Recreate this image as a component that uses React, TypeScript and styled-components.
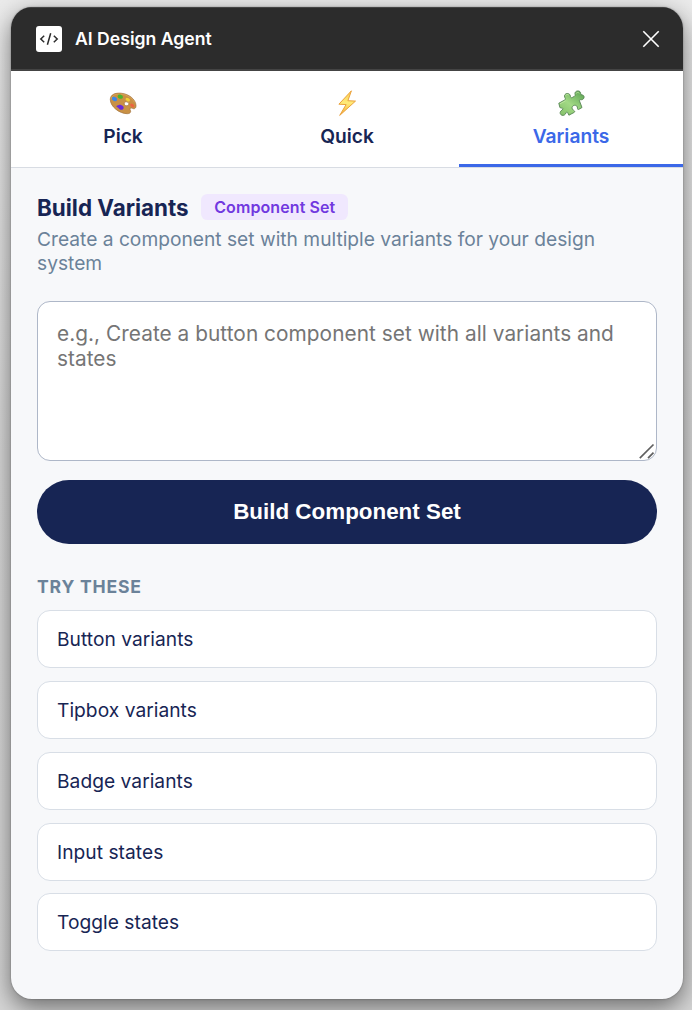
import React, { useState } from "react";
import styled, { createGlobalStyle } from "styled-components";

const GlobalStyle = createGlobalStyle`
  * { box-sizing: border-box; }
  body {
    margin: 0;
    background: #e6e6e6;
    font-family: Inter, "Liberation Sans", sans-serif;
  }
`;

const Stage = styled.div`
  height: 1010px;
  padding: 7px 9px 11px 11px;
  overflow: hidden;
  background: linear-gradient(#ebebeb, #d9d9d9 45%, #d6d6d6);
`;

const Panel = styled.main`
  display: flex;
  flex-direction: column;
  height: 992px;
  border-radius: 21px;
  background: #f7f8fa;
  box-shadow: 0 0 2px rgba(0, 0, 0, 0.35), 0 8px 24px rgba(0, 0, 0, 0.5);
  overflow: hidden;
`;

const Header = styled.header`
  display: flex;
  align-items: center;
  height: 64px;
  padding: 0 20px 0 25px;
  background: #2c2c2c;
  border-bottom: 2px solid #444;
  border-top: 1px solid #444;
`;

const HeaderTitle = styled.h1`
  flex: 1;
  margin: 0 0 0 13px;
  color: #fff;
  font-size: 17.6px;
  line-height: 24px;
  font-weight: 600;
`;

const CloseButton = styled.button`
  display: flex;
  padding: 3px;
  border: 0;
  background: none;
`;

const Tabs = styled.nav`
  display: grid;
  grid-template-columns: repeat(3, 1fr);
  height: 97px;
  background: #fff;
  border-bottom: 1px solid #d8dce3;
`;

const Tab = styled.button<{ $active: boolean }>`
  display: flex;
  flex-direction: column;
  align-items: center;
  gap: 5px;
  padding: 18px 0 0;
  border: 0;
  border-bottom: 3px solid ${(p) => (p.$active ? "#3b68e8" : "transparent")};
  background: none;
  color: ${(p) => (p.$active ? "#3b68e8" : "#172554")};
  font-family: inherit;
  font-size: 19.2px;
  line-height: 24px;
  font-weight: 600;
`;

const Content = styled.section`
  display: flex;
  flex-direction: column;
  padding: 26px 26px 0;
`;

const TitleRow = styled.div`
  display: flex;
  align-items: flex-start;
  gap: 12.6px;
  height: 27px;
`;

const Title = styled.h2`
  margin: 0;
  color: #172554;
  font-size: 22.4px;
  line-height: 27px;
  font-weight: 700;
`;

const Badge = styled.span`
  height: 26px;
  padding: 0 13px;
  border-radius: 6.4px;
  background: #f0e8fe;
  color: #7138e0;
  font-size: 16px;
  line-height: 26px;
  font-weight: 600;
  letter-spacing: 0.1px;
`;

const Description = styled.p`
  margin: 6px 0 0;
  color: #6b8299;
  font-size: 19.2px;
  line-height: 24px;
`;

const PromptField = styled.div`
  position: relative;
  height: 160px;
  margin-top: 26px;
`;

const PromptInput = styled.textarea`
  display: block;
  width: 100%;
  height: 100%;
  padding: 19px 19px;
  border: 1px solid #aeb7c8;
  border-radius: 13px;
  background: #fff;
  color: #172554;
  font-family: inherit;
  font-size: 20.8px;
  line-height: 25px;
  letter-spacing: 0.05px;
  resize: none;
  outline: none;
  &::placeholder { color: #757575; opacity: 1; }
`;

const Grip = styled.svg`
  position: absolute;
  right: 2px;
  bottom: 2px;
`;

const BuildButton = styled.button`
  height: 64px;
  margin-top: 19px;
  padding: 0;
  border: 0;
  border-radius: 32px;
  background: #172554;
  color: #fff;
  font-family: "Liberation Sans", Arial, sans-serif;
  font-size: 22.4px;
  font-weight: 700;
`;

const ExamplesLabel = styled.h3`
  margin: 31px 0 11px;
  color: #6b8299;
  font-size: 17.6px;
  line-height: 24px;
  font-weight: 700;
  letter-spacing: 0.8px;
`;

const ExampleList = styled.div`
  display: flex;
  flex-direction: column;
  gap: 12.85px;
`;

const Example = styled.button`
  height: 58px;
  padding: 0 19px;
  border: 1px solid #d8dee6;
  border-radius: 13px;
  background: #fff;
  color: #172554;
  font-family: inherit;
  font-size: 19.2px;
  letter-spacing: 0.03px;
  text-align: left;
`;

const CodeLogo = () => (
  <svg width="26" height="26" viewBox="0 0 26 26" fill="none">
    <rect width="26" height="26" rx="3" fill="#fff" />
    <path d="M8.2 9.8 4.8 13l3.4 3.2M17.8 9.8l3.4 3.2-3.4 3.2M14.7 7.2 11.4 18.8" stroke="#2c2c2c" strokeWidth="1.5" />
  </svg>
);

const CloseIcon = () => (
  <svg width="18" height="18" viewBox="0 0 18 18">
    <path d="M1.3 1.3 16.7 16.7M16.7 1.3 1.3 16.7" stroke="#fff" strokeWidth="1.6" />
  </svg>
);

const PaletteIcon = () => (
  <svg width="30" height="30" viewBox="0 0 30 30">
    <path d="M2.3 10.2C2.5 5.6 7.2 3.7 13 4.2c7.8.6 14.8 6.2 15 12.3.1 3-1.7 3.8-3.7 2.8-1.6-.8-3 .2-2.1 1.7 1.2 2-.1 3.7-2.9 3.7C11.8 24.8 2 17.7 2.3 10.2Zm14.2 3.5c-.9 1.5.2 3 1.9 3 1.9 0 3-1.2 2.3-2.5-.8-1.5-3.3-1.9-4.2-.5Z" fill="#c99145" fillRule="evenodd" stroke="#a0703a" strokeWidth=".7" />
    <path d="M3.1 9.7C4 6.2 8 4.6 13 5.1c6 .5 11.5 4 13.5 8.4" fill="none" stroke="#dca65a" strokeWidth=".8" />
    <ellipse cx="6.5" cy="10" rx="2.7" ry="2" fill="#3e86e4" transform="rotate(20 6.5 10)" />
    <ellipse cx="12.3" cy="7.7" rx="2.7" ry="2" fill="#48b52d" transform="rotate(15 12.3 7.7)" />
    <ellipse cx="19.8" cy="10.6" rx="2.4" ry="1.6" fill="#f1cf32" transform="rotate(30 19.8 10.6)" />
    <ellipse cx="24.2" cy="16.4" rx="2.3" ry="1.5" fill="#ed6441" transform="rotate(40 24.2 16.4)" />
    <path d="M9.4 16.5c1.5-.1 2.3-1.3 3.6-.5 1.7.4 3 1.7 2.6 3.2-.5 1.7-2.5 1.9-4 1-1.2-.6-1.2-1.7-2.6-2.1-.9-.3-.7-1.3.4-1.6Z" fill="#6a2bd9" />
  </svg>
);

const BoltIcon = () => (
  <svg width="30" height="30" viewBox="0 0 30 30">
    <defs>
      <linearGradient id="bolt" x2="0" y2="1">
        <stop stopColor="#f9cf54" />
        <stop offset=".5" stopColor="#ffeb78" />
        <stop offset="1" stopColor="#f4aa35" />
      </linearGradient>
    </defs>
    <path d="M19.4 1.8 6.9 15.2l7.2.4L7.7 26.4 23.5 12.1l-7.6-.4L19.4 1.8Z" fill="url(#bolt)" stroke="#eba23d" strokeWidth="1" strokeLinejoin="round" />
  </svg>
);

const PuzzleIcon = () => (
  <svg width="30" height="30" viewBox="0 0 30 30">
    <defs>
      <linearGradient id="puzzle" x1="0" y1="1" x2=".8" y2="0">
        <stop stopColor="#83bf68" />
        <stop offset=".5" stopColor="#a2d985" />
        <stop offset="1" stopColor="#63a958" />
      </linearGradient>
    </defs>
    <path
      d="M2.8 14.2 8.9 10.9C9.8 10.2 9.3 9.3 8.7 8.2 7.9 6.4 9.2 4.6 11.2 4.5c2-.1 3.2 1.3 3.3 3 .1 1.2.8 1.5 1.7 1l2.4-1.3c.8-.5.6-1.3.4-2.1-.4-1.7 1-3.2 2.9-3.2 1.7 0 2.9 1.1 2.8 2.7 0 .9.4 1.2 1.3 1.3 1.7.1 2.5 1.6 1.9 3.1-.5 1.4-1.8 1.9-3.3 1.7-1-.1-1.4.5-1.1 1.3l2.5 6.5-3.3 1.9c-.9.3-1.3-.3-1.2-1.2.1-1.9-1.3-3.2-3.1-2.9-1.9.3-2.9 2.1-2.1 3.7.5 1.1 1.7 1.3 2.2 2.1.4.6.2 1-.5 1.4l-5.1 2.7-1.2-2.5c-.5-.9-1.3-.8-1.7.2-.7 1.8-2.3 3-4.2 2.3-1.6-.6-2.1-2.4-1.2-3.9.7-1.1 2-1.3 2.3-2.2.2-.8-.6-1.1-1.5-1-.8.1-1.3-.2-1.6-.9Z"
      fill="url(#puzzle)"
      stroke="#568552"
      strokeWidth=".9"
      strokeLinejoin="round"
    />
    <path d="M9.6 6.5c.4-1.2 2.3-1.5 3.2-.4M20 4.6c.4-1.2 2.4-1.6 3.3-.3M4 14.8l5.5-3" fill="none" stroke="#c4e8a5" strokeWidth=".8" />
  </svg>
);

const tabs = [
  { label: "Pick", Icon: PaletteIcon },
  { label: "Quick", Icon: BoltIcon },
  { label: "Variants", Icon: PuzzleIcon },
];

const examples = ["Button variants", "Tipbox variants", "Badge variants", "Input states", "Toggle states"];

export default function App() {
  const [active, setActive] = useState("Variants");
  const [prompt, setPrompt] = useState("");
  return (
    <>
      <GlobalStyle />
      <Stage>
        <Panel>
          <Header>
            <CodeLogo />
            <HeaderTitle>AI Design Agent</HeaderTitle>
            <CloseButton aria-label="Close"><CloseIcon /></CloseButton>
          </Header>
          <Tabs>
            {tabs.map(({ label, Icon }) => (
              <Tab key={label} $active={label === active} onClick={() => setActive(label)}>
                <Icon />
                <span>{label}</span>
              </Tab>
            ))}
          </Tabs>
          <Content>
            <TitleRow>
              <Title>Build Variants</Title>
              <Badge>Component Set</Badge>
            </TitleRow>
            <Description>Create a component set with multiple variants for your design system</Description>
            <PromptField>
              <PromptInput
                value={prompt}
                onChange={(e) => setPrompt(e.target.value)}
                placeholder="e.g., Create a button component set with all variants and states"
              />
              <Grip width="16" height="16" viewBox="0 0 16 16">
                <path d="M.8 15.2 14.5 1.5M9 15.2l5.5-5.5" stroke="#606060" strokeWidth="1.7" />
              </Grip>
            </PromptField>
            <BuildButton>Build Component Set</BuildButton>
            <ExamplesLabel>TRY THESE</ExamplesLabel>
            <ExampleList>
              {examples.map((text) => (
                <Example key={text} onClick={() => setPrompt(text)}>{text}</Example>
              ))}
            </ExampleList>
          </Content>
        </Panel>
      </Stage>
    </>
  );
}
